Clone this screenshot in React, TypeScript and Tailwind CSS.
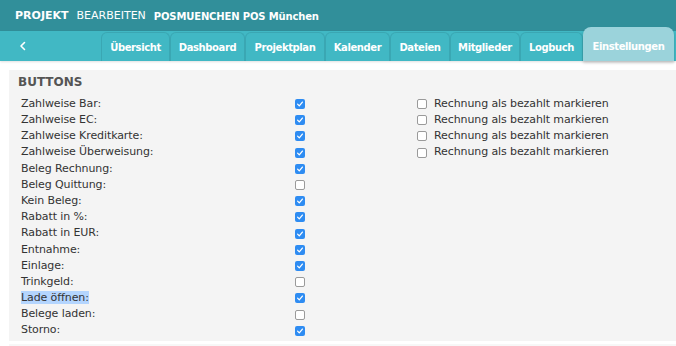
const tabs = [
  { label: "Übersicht", w: "w-[69px]" },
  { label: "Dashboard", w: "w-[75px]" },
  { label: "Projektplan", w: "w-[80px]" },
  { label: "Kalender", w: "w-[65px]" },
  { label: "Dateien", w: "w-[60px]" },
  { label: "Mitglieder", w: "w-[70px]" },
  { label: "Logbuch", w: "w-[63px]" },
];

const rows: { label: string; checked: boolean; selected?: boolean }[] = [
  { label: "Zahlweise Bar:", checked: true },
  { label: "Zahlweise EC:", checked: true },
  { label: "Zahlweise Kreditkarte:", checked: true },
  { label: "Zahlweise Überweisung:", checked: true },
  { label: "Beleg Rechnung:", checked: true },
  { label: "Beleg Quittung:", checked: false },
  { label: "Kein Beleg:", checked: true },
  { label: "Rabatt in %:", checked: true },
  { label: "Rabatt in EUR:", checked: true },
  { label: "Entnahme:", checked: true },
  { label: "Einlage:", checked: true },
  { label: "Trinkgeld:", checked: false },
  { label: "Lade öffnen:", checked: true, selected: true },
  { label: "Belege laden:", checked: false },
  { label: "Storno:", checked: true },
];

function Box({ checked }: { checked: boolean }) {
  if (checked) {
    return (
      <span className="flex h-[10px] w-[10px] items-center justify-center rounded-[2px] bg-[#2e8cf2]">
        <svg viewBox="0 0 10 10" className="h-[8px] w-[8px]" fill="none">
          <path d="M2 5.2 L4.1 7.3 L8 2.6" stroke="white" strokeWidth="1.6" strokeLinecap="round" strokeLinejoin="round" />
        </svg>
      </span>
    );
  }
  return <span className="block h-[10px] w-[10px] rounded-[2px] border border-[#9a9a9a] bg-white" />;
}

export default function App() {
  return (
    <div className="h-[346px] w-[676px] overflow-hidden bg-white font-['DejaVu_Sans',Verdana,sans-serif]">
      <header className="flex h-[31px] items-center gap-[8px] bg-[#318f9a] pl-[15px] pt-[1px] text-[11px] text-white">
        <span className="font-bold">PROJEKT</span>
        <span>BEARBEITEN</span>
        <span className="text-[10px] font-bold tracking-[-0.15px]">POSMUENCHEN POS München</span>
      </header>

      <nav className="relative flex h-[30px] items-end bg-[#41b8c4] shadow-[0_1px_2px_rgba(0,0,0,0.12)]">
        <div className="flex h-full w-[101px] items-center pl-[18px]">
          <svg viewBox="0 0 10 10" className="h-[10px] w-[10px]" fill="none">
            <path d="M6.5 1.5 L3 5 L6.5 8.5" stroke="white" strokeWidth="1.6" strokeLinecap="round" strokeLinejoin="round" />
          </svg>
        </div>
        {tabs.map((t) => (
          <div
            key={t.label}
            className={`${t.w} flex h-[29px] items-center justify-center rounded-t-[6px] border border-b-0 border-[#3aa7b3] bg-[#41b8c4] text-[10px] font-bold tracking-[-0.4px] text-white`}
          >
            {t.label}
          </div>
        ))}
        <div className="relative flex h-[34px] w-[91px] items-center justify-center rounded-t-[8px] bg-[#9bd3db] pt-[4px] text-[10px] font-bold tracking-[-0.4px] text-white shadow-[0_2px_3px_rgba(0,0,0,0.18)]">
          Einstellungen
        </div>
      </nav>

      <div className="pl-[9px] pt-[9px]">
        <section className="h-[271px] bg-[#f4f4f4] pl-[9px] pt-[3px] text-[11px] tracking-[-0.1px] text-[#333]">
          <h2 className="text-[12px] font-bold tracking-normal text-[#555]">BUTTONS</h2>
          <div className="mt-[5px] flex">
            <div className="w-[399px]">
              {rows.map((r) => (
                <div key={r.label} className="flex h-[16.2px] items-center">
                  <span className="w-[277px] pl-[3px]">
                    <span className={r.selected ? "bg-[#b4d5fe]" : ""}>{r.label}</span>
                  </span>
                  <Box checked={r.checked} />
                </div>
              ))}
            </div>
            <div>
              {[0, 1, 2, 3].map((i) => (
                <div key={i} className="flex h-[16.2px] items-center gap-[7px]">
                  <Box checked={false} />
                  <span>Rechnung als bezahlt markieren</span>
                </div>
              ))}
            </div>
          </div>
        </section>
        <div className="mt-[3px] h-[10px] bg-[#f7f7f7]" />
      </div>
    </div>
  );
}
